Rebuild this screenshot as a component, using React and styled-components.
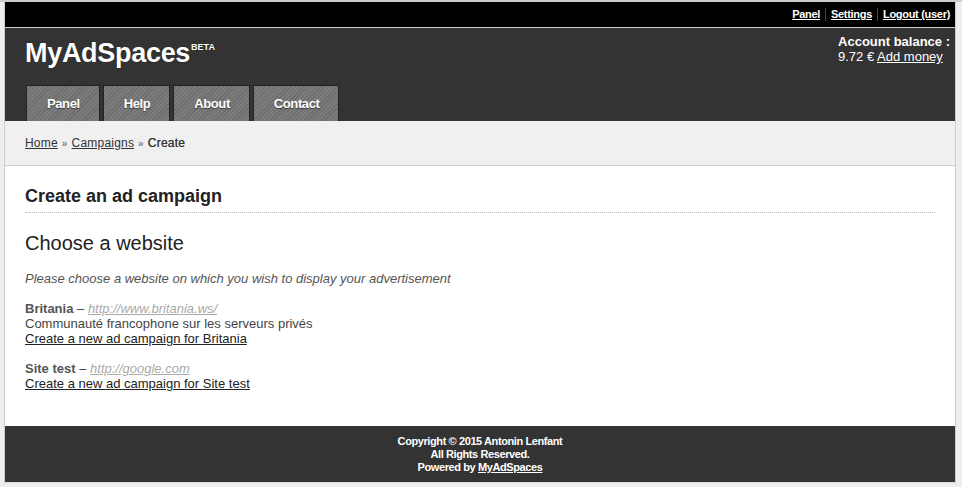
import React from "react";
import styled, { createGlobalStyle } from "styled-components";

const GlobalStyle = createGlobalStyle`
  html, body {
    margin: 0;
    padding: 0;
    background: #eeeeee;
    font-family: "Liberation Sans", Arial, sans-serif;
  }
  body {
    border-top: 2px solid #cccccc;
  }
`;

const Wrapper = styled.div`
  width: 950px;
  margin-left: 4px;
  border-left: 1px solid #cccccc;
  border-right: 1px solid #cccccc;
  border-bottom: 1px solid #dddddd;
  background: #ffffff;
`;

const TopBar = styled.div`
  height: 25px;
  background: #000000;
  border-bottom: 1px solid #cccccc;
  display: flex;
  justify-content: flex-end;
  align-items: center;
  padding-right: 5px;
`;

const TopLink = styled.a`
  color: #ffffff;
  font-size: 11px;
  font-weight: bold;
  letter-spacing: -0.3px;
  text-decoration: underline;
  padding: 0 5px;
  line-height: 13px;
  border-left: ${(p) => (p.$first ? "none" : "1px solid #444")};
  &:last-child {
    padding-right: 0;
  }
`;

const Header = styled.header`
  background: #333333;
`;

const HeaderTop = styled.div`
  height: 57px;
  display: flex;
  justify-content: space-between;
  align-items: flex-start;
  padding: 0 5px 0 20px;
`;

const Logo = styled.h1`
  margin: 9px 0 0;
  color: #ffffff;
  font-size: 27px;
  letter-spacing: -0.3px;
  font-weight: bold;
  line-height: 32px;
  text-shadow: 0 0 1px rgba(0, 0, 0, 0.6);
`;

const Beta = styled.sup`
  font-size: 9px;
  letter-spacing: 0;
  vertical-align: top;
  position: relative;
  top: -6px;
  margin-left: 1px;
`;

const Balance = styled.div`
  margin-top: 6px;
  color: #ffffff;
  font-size: 13px;
  line-height: 15px;
`;

const BalanceTitle = styled.div`
  font-weight: bold;
`;

const BalanceLink = styled.a`
  color: #ffffff;
  text-decoration: underline;
`;

const Tabs = styled.nav`
  display: flex;
  gap: 3px;
  padding-left: 21px;
  height: 36px;
  align-items: flex-end;
`;

const Tab = styled.a`
  height: 35px;
  padding: 0 19px 0 20px;
  display: flex;
  align-items: center;
  border: 1px solid #222222;
  border-bottom: none;
  background: repeating-linear-gradient(
    -45deg,
    #6c6c6c 0px,
    #6c6c6c 1px,
    #7b7b7b 1px,
    #7b7b7b 3px
  );
  color: #ffffff;
  font-size: 13px;
  font-weight: bold;
  letter-spacing: -0.4px;
  text-decoration: none;
  text-shadow: 0 1px 1px rgba(0, 0, 0, 0.5);
`;

const Breadcrumb = styled.div`
  height: 44px;
  background: #f0f0f0;
  border-bottom: 1px solid #cccccc;
  display: flex;
  align-items: center;
  padding-left: 20px;
  font-size: 12px;
  letter-spacing: 0.2px;
  color: #444444;
`;

const Current = styled.span`
  color: #3a3a3a;
  text-shadow: 0 0 0.4px #3a3a3a;
`;

const CrumbLink = styled.a`
  color: #333333;
  text-decoration: underline;
`;

const Sep = styled.span`
  font-size: 10px;
  margin: 0 4px;
  color: #555555;
`;

const Content = styled.main`
  padding: 19px 20px 35px;
`;

const PageTitle = styled.h2`
  margin: 0;
  font-size: 18px;
  line-height: 22px;
  color: #222222;
  padding-bottom: 5px;
  border-bottom: 1px dotted #bbbbbb;
`;

const SubTitle = styled.h3`
  margin: 18px 0 0;
  font-size: 20px;
  font-weight: normal;
  line-height: 24px;
  color: #222222;
`;

const Intro = styled.p`
  margin: 16px 0 0;
  font-size: 13px;
  line-height: 15px;
  font-style: italic;
  color: #555555;
`;

const Site = styled.div`
  margin-top: 15px;
  font-size: 13px;
  line-height: 15px;
  color: #444444;
`;

const SiteName = styled.strong`
  color: #555555;
`;

const SiteUrl = styled.a`
  color: #aaaaaa;
  font-style: italic;
  text-decoration: underline;
`;

const CreateLink = styled.a`
  color: #222222;
  text-decoration: underline;
  display: block;
`;

const Footer = styled.footer`
  background: #333333;
  padding: 9px 0 8px;
  text-align: center;
  color: #ffffff;
  font-size: 11px;
  font-weight: bold;
  letter-spacing: -0.4px;
  line-height: 13px;
`;

const FooterLink = styled.a`
  color: #ffffff;
  text-decoration: underline;
`;

const sites = [
  {
    name: "Britania",
    url: "http://www.britania.ws/",
    description: "Communauté francophone sur les serveurs privés",
  },
  { name: "Site test", url: "http://google.com" },
];

const App = () => {
  return (
    <>
      <GlobalStyle />
      <Wrapper>
        <TopBar>
          <TopLink $first href="#">Panel</TopLink>
          <TopLink href="#">Settings</TopLink>
          <TopLink href="#">Logout (user)</TopLink>
        </TopBar>
        <Header>
          <HeaderTop>
            <Logo>
              MyAdSpaces<Beta>BETA</Beta>
            </Logo>
            <Balance>
              <BalanceTitle>Account balance :</BalanceTitle>
              9.72 € <BalanceLink href="#">Add money</BalanceLink>
            </Balance>
          </HeaderTop>
          <Tabs>
            <Tab href="#">Panel</Tab>
            <Tab href="#">Help</Tab>
            <Tab href="#">About</Tab>
            <Tab href="#">Contact</Tab>
          </Tabs>
        </Header>
        <Breadcrumb>
          <CrumbLink href="#">Home</CrumbLink>
          <Sep>»</Sep>
          <CrumbLink href="#">Campaigns</CrumbLink>
          <Sep>»</Sep>
          <Current>Create</Current>
        </Breadcrumb>
        <Content>
          <PageTitle>Create an ad campaign</PageTitle>
          <SubTitle>Choose a website</SubTitle>
          <Intro>
            Please choose a website on which you wish to display your
            advertisement
          </Intro>
          {sites.map((s) => (
            <Site key={s.name}>
              <SiteName>{s.name}</SiteName> –{" "}
              <SiteUrl href="#">{s.url}</SiteUrl>
              {s.description && <div>{s.description}</div>}
              <CreateLink href="#">
                Create a new ad campaign for {s.name}
              </CreateLink>
            </Site>
          ))}
        </Content>
        <Footer>
          <div>Copyright © 2015 Antonin Lenfant</div>
          <div>All Rights Reserved.</div>
          <div>
            Powered by <FooterLink href="#">MyAdSpaces</FooterLink>
          </div>
        </Footer>
      </Wrapper>
    </>
  );
};

export default App;
